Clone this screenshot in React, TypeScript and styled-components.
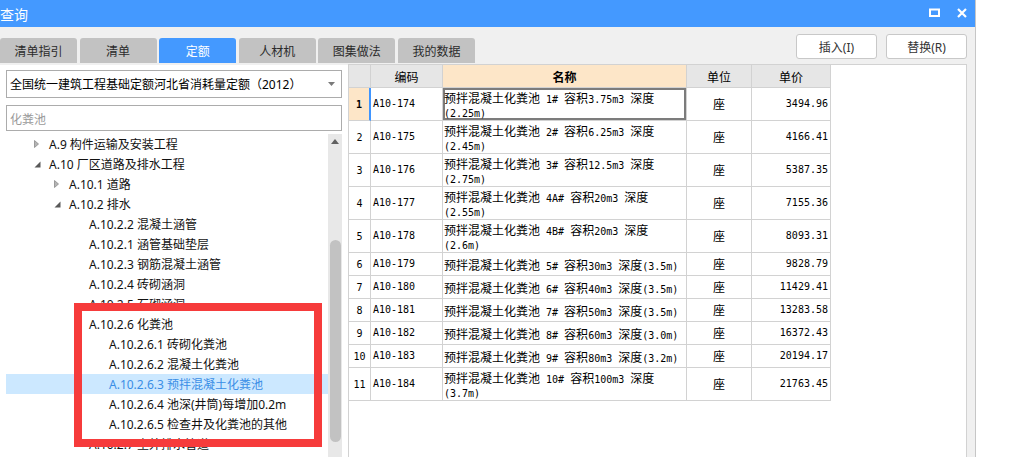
import React from 'react';
import styled, { createGlobalStyle } from 'styled-components';

type TreeNode = {
  label: string;
  level: number;
  icon?: 'open' | 'closed';
  selected?: boolean;
};

type QuotaRow = {
  code: string;
  lines: string[];
  price: string;
};

const treeNodes: TreeNode[] = [
  { label: 'A.9 构件运输及安装工程', level: 0, icon: 'closed' },
  { label: 'A.10 厂区道路及排水工程', level: 0, icon: 'open' },
  { label: 'A.10.1 道路', level: 1, icon: 'closed' },
  { label: 'A.10.2 排水', level: 1, icon: 'open' },
  { label: 'A.10.2.2 混凝土涵管', level: 2 },
  { label: 'A.10.2.1 涵管基础垫层', level: 2 },
  { label: 'A.10.2.3 钢筋混凝土涵管', level: 2 },
  { label: 'A.10.2.4 砖砌涵洞', level: 2 },
  { label: 'A.10.2.5 石砌涵洞', level: 2 },
  { label: 'A.10.2.6 化粪池', level: 2, icon: 'open' },
  { label: 'A.10.2.6.1 砖砌化粪池', level: 3 },
  { label: 'A.10.2.6.2 混凝土化粪池', level: 3 },
  { label: 'A.10.2.6.3 预拌混凝土化粪池', level: 3, selected: true },
  { label: 'A.10.2.6.4 池深(井筒)每增加0.2m', level: 3 },
  { label: 'A.10.2.6.5 检查井及化粪池的其他', level: 3 },
  { label: 'A.10.2.7 室外排水管道', level: 2 },
];

const rows: QuotaRow[] = [
  { code: 'A10-174', lines: ['预拌混凝土化粪池 1# 容积3.75m3 深度', '(2.25m)'], price: '3494.96' },
  { code: 'A10-175', lines: ['预拌混凝土化粪池 2# 容积6.25m3 深度', '(2.45m)'], price: '4166.41' },
  { code: 'A10-176', lines: ['预拌混凝土化粪池 3# 容积12.5m3 深度', '(2.75m)'], price: '5387.35' },
  { code: 'A10-177', lines: ['预拌混凝土化粪池 4A# 容积20m3 深度', '(2.55m)'], price: '7155.36' },
  { code: 'A10-178', lines: ['预拌混凝土化粪池 4B# 容积20m3 深度', '(2.6m)'], price: '8093.31' },
  { code: 'A10-179', lines: ['预拌混凝土化粪池 5# 容积30m3 深度(3.5m)'], price: '9828.79' },
  { code: 'A10-180', lines: ['预拌混凝土化粪池 6# 容积40m3 深度(3.5m)'], price: '11429.41' },
  { code: 'A10-181', lines: ['预拌混凝土化粪池 7# 容积50m3 深度(3.5m)'], price: '13283.58' },
  { code: 'A10-182', lines: ['预拌混凝土化粪池 8# 容积60m3 深度(3.0m)'], price: '16372.43' },
  { code: 'A10-183', lines: ['预拌混凝土化粪池 9# 容积80m3 深度(3.2m)'], price: '20194.17' },
  { code: 'A10-184', lines: ['预拌混凝土化粪池 10# 容积100m3 深度', '(3.7m)'], price: '21763.45' },
];

const tabs = ['清单指引', '清单', '定额', '人材机', '图集做法', '我的数据'];

// 表格里的中文用宽字体，数字字母用半角等宽
const mixed = (text: string) =>
  text
    .split(/([\u3400-\u9fff\uff00-\uffef]+)/)
    .filter(Boolean)
    .map((part, i) =>
      /[\u3400-\u9fff\uff00-\uffef]/.test(part) ? (
        <Han key={i}>{part}</Han>
      ) : (
        <Half key={i}>{part}</Half>
      ),
    );

const App: React.FC = () => {
  return (
    <>
      <GlobalStyle />
      <Window>
        {/* 标题栏 */}
        <TitleBar>
          <span>查询</span>
          <TitleIcons>
            <svg width="11" height="9" viewBox="0 0 11 9">
              <rect x="1" y="1.5" width="9" height="6.5" fill="none" stroke="#fff" strokeWidth="2" />
            </svg>
            <svg width="10" height="10" viewBox="0 0 10 10">
              <path d="M1 1 L9 9 M9 1 L1 9" stroke="#fff" strokeWidth="2.2" />
            </svg>
          </TitleIcons>
        </TitleBar>

        {/* 页签 + 按钮 */}
        <Toolbar>
          <Tabs>
            {tabs.map((t) => (
              <Tab key={t} $active={t === '定额'}>
                {t}
              </Tab>
            ))}
          </Tabs>
          <Actions>
            <ActionButton>插入(I)</ActionButton>
            <ActionButton>替换(R)</ActionButton>
          </Actions>
        </Toolbar>

        <Body>
          {/* 左侧定额树 */}
          <LeftPanel>
            <Combo>
              <span>全国统一建筑工程基础定额河北省消耗量定额（2012）</span>
              <svg width="7" height="4" viewBox="0 0 7 4">
                <path d="M0 0 H7 L3.5 4 Z" fill="#7a7a7a" />
              </svg>
            </Combo>
            <Search>化粪池</Search>
            <TreeArea>
              <TreeList>
                {treeNodes.map((n) => (
                  <TreeRow key={n.label} $level={n.level} $selected={!!n.selected}>
                    <Expander>
                      {n.icon === 'closed' && (
                        <svg width="5" height="8" viewBox="0 0 5 8">
                          <path d="M0.5 0.5 L4.5 4 L0.5 7.5 Z" fill="#b4b4b4" stroke="#8c8c8c" strokeWidth="0.8" />
                        </svg>
                      )}
                      {n.icon === 'open' && (
                        <svg width="7" height="7" viewBox="0 0 7 7">
                          <path d="M6.5 0.5 L6.5 6.5 L0.5 6.5 Z" fill="#595959" />
                        </svg>
                      )}
                    </Expander>
                    <TreeLabel>{n.label}</TreeLabel>
                  </TreeRow>
                ))}
              </TreeList>
              <ScrollBar>
                <ScrollArrow>
                  <svg width="8" height="5" viewBox="0 0 8 5">
                    <path d="M0 5 L4 0 L8 5 Z" fill="#606060" />
                  </svg>
                </ScrollArrow>
                <Thumb />
              </ScrollBar>
            </TreeArea>
          </LeftPanel>

          {/* 右侧定额表 */}
          <TablePane>
            <GridRow $h={23}>
              <HeadCell />
              <HeadCell>编码</HeadCell>
              <HeadCell $active>名称</HeadCell>
              <HeadCell>单位</HeadCell>
              <HeadCell>单价</HeadCell>
            </GridRow>
            {rows.map((r, i) => (
              <GridRow key={r.code} $h={r.lines.length > 1 ? 33 : 23}>
                <NumCell $current={i === 0}>{i + 1}</NumCell>
                <CodeCell>{mixed(r.code)}</CodeCell>
                <NameCell $focused={i === 0}>
                  {r.lines.map((l) => (
                    <NameLine key={l}>{mixed(l)}</NameLine>
                  ))}
                </NameCell>
                <UnitCell>
                  <Han>座</Han>
                </UnitCell>
                <PriceCell>{mixed(r.price)}</PriceCell>
              </GridRow>
            ))}
          </TablePane>
        </Body>

        {/* 红色标注框 */}
        <Highlight />
      </Window>
    </>
  );
};

const GlobalStyle = createGlobalStyle`
  html, body {
    margin: 0;
    padding: 0;
    background: #fff;
  }
  body {
    font-family: "Noto Sans", "Noto Sans CJK SC", sans-serif;
  }
  * {
    box-sizing: border-box;
  }
`;

const Window = styled.div`
  position: relative;
  width: 976px;
  height: 457px;
  overflow: hidden;
  display: flex;
  flex-direction: column;
  background: #f0f0f0;
  border-right: 1px solid #c6c6c6;
`;

const TitleBar = styled.div`
  height: 27px;
  flex: none;
  display: flex;
  align-items: center;
  justify-content: space-between;
  padding: 0 8px 0 0;
  background: #4499ff;
  color: #fff;
  font-family: "Noto Sans CJK SC", sans-serif;
  font-size: 14px;
`;

const TitleIcons = styled.div`
  display: flex;
  align-items: center;
  gap: 17px;
  margin-top: -2px;
`;

const Toolbar = styled.div`
  height: 37px;
  flex: none;
  display: flex;
  justify-content: space-between;
  padding-right: 8px;
`;

const Tabs = styled.div`
  display: flex;
  gap: 2.6px;
  align-self: flex-end;
  margin-bottom: 1px;
`;

const Tab = styled.div<{ $active: boolean }>`
  width: 77px;
  height: 25px;
  display: flex;
  align-items: center;
  justify-content: center;
  border-radius: 3px 3px 0 0;
  background: ${(p) => (p.$active ? '#4499ff' : '#c2c2c2')};
  color: ${(p) => (p.$active ? '#fff' : '#2b2b2b')};
  font-family: "Noto Sans CJK SC", sans-serif;
  font-size: 12px;
`;

const Actions = styled.div`
  display: flex;
  gap: 9px;
  margin-top: 7px;
`;

const ActionButton = styled.button`
  width: 81px;
  height: 25px;
  padding: 0;
  background: #fff;
  border: 1px solid #c8c8c8;
  border-radius: 3px;
  color: #333;
  font-family: "Noto Sans", "Noto Sans CJK SC", sans-serif;
  font-size: 12px;
`;

const Body = styled.div`
  flex: 1;
  min-height: 0;
  display: flex;
`;

const LeftPanel = styled.div`
  width: 348px;
  flex: none;
  margin-top: 1px;
  padding: 5px 6px 0 6px;
  display: flex;
  flex-direction: column;
  background: #fff;
`;

const Combo = styled.div`
  height: 28px;
  flex: none;
  display: flex;
  align-items: center;
  justify-content: space-between;
  padding: 0 6px 0 3px;
  border: 1px solid #acacac;
  color: #000;
  font-family: "Noto Sans", "Noto Sans CJK SC", sans-serif;
  font-size: 12px;
  white-space: nowrap;
`;

const Search = styled.div`
  height: 26px;
  flex: none;
  margin-top: 7px;
  display: flex;
  align-items: center;
  padding-left: 3px;
  border: 1px solid #acacac;
  color: #9a9a9a;
  font-family: "Noto Sans CJK SC", sans-serif;
  font-size: 12px;
`;

const TreeArea = styled.div`
  flex: 1;
  min-height: 0;
  display: flex;
  margin-top: 3px;
`;

const TreeList = styled.div`
  flex: 1;
  overflow: hidden;
`;

const TreeRow = styled.div<{ $level: number; $selected: boolean }>`
  height: 20px;
  display: flex;
  align-items: center;
  padding-left: ${(p) => 26 + p.$level * 20}px;
  background: ${(p) => (p.$selected ? '#cce8ff' : 'transparent')};
  color: ${(p) => (p.$selected ? '#3a8ee6' : '#111')};
`;

const Expander = styled.div`
  width: 17px;
  flex: none;
  display: flex;
  align-items: center;
  padding-left: 2px;
`;

const TreeLabel = styled.span`
  font-family: "Noto Sans", "Noto Sans CJK SC", sans-serif;
  font-size: 12px;
  white-space: nowrap;
`;

const ScrollBar = styled.div`
  width: 14px;
  flex: none;
  display: flex;
  flex-direction: column;
  align-items: center;
  background: #e8e8e8;
`;

const ScrollArrow = styled.div`
  height: 14px;
  display: flex;
  align-items: center;
  justify-content: center;
`;

const Thumb = styled.div`
  width: 11px;
  height: 202px;
  margin-top: 92px;
  border-radius: 6px;
  background: #c2c2c2;
`;

const TablePane = styled.div`
  flex: 1;
  margin-right: 8px;
  background: #fff;
  border: 1px solid #d2d2d2;
  border-bottom: none;
`;

const GridRow = styled.div<{ $h: number }>`
  display: grid;
  grid-template-columns: 22px 72px 244px 65px 79px;
  height: ${(p) => p.$h}px;
`;

const Cell = styled.div`
  display: flex;
  align-items: center;
  min-width: 0;
  border-right: 1px solid #d2d2d2;
  border-bottom: 1px solid #d2d2d2;
  color: #000;
  white-space: nowrap;
  overflow: hidden;
`;

const HeadCell = styled(Cell)<{ $active?: boolean }>`
  justify-content: center;
  background: ${(p) => (p.$active ? '#fde6c8' : '#e6e6e6')};
  font-family: "Noto Sans CJK SC", sans-serif;
  font-size: 12px;
  font-weight: ${(p) => (p.$active ? 700 : 400)};
`;

const NumCell = styled(Cell)<{ $current: boolean }>`
  justify-content: center;
  background: ${(p) => (p.$current ? '#fde6c8' : '#fff')};
  border-right: ${(p) => (p.$current ? '2px solid #3f95ff' : '1px solid #d2d2d2')};
  font-family: "DejaVu Sans Mono", monospace;
  font-size: 10px;
  font-weight: ${(p) => (p.$current ? 700 : 400)};
`;

const CodeCell = styled(Cell)`
  padding-left: 2px;
`;

const NameCell = styled(Cell)<{ $focused: boolean }>`
  flex-direction: column;
  align-items: flex-start;
  justify-content: center;
  padding-left: 1px;
  box-shadow: ${(p) => (p.$focused ? 'inset 0 0 0 2px #7c7c7c' : 'none')};
`;

const NameLine = styled.div`
  height: 14px;
  line-height: 14px;
`;

const UnitCell = styled(Cell)`
  justify-content: center;
`;

const PriceCell = styled(Cell)`
  justify-content: flex-end;
  padding-right: 2px;
`;

const Han = styled.span`
  font-family: "Noto Sans CJK SC", sans-serif;
  font-size: 12px;
  line-height: 14px;
`;

const Half = styled.span`
  font-family: "DejaVu Sans Mono", monospace;
  font-size: 10px;
  line-height: 14px;
  white-space: pre;
`;

const Highlight = styled.div`
  position: absolute;
  left: 74px;
  top: 303px;
  width: 248px;
  height: 144px;
  border: 8px solid #f63b3b;
  pointer-events: none;
`;

export default App;
